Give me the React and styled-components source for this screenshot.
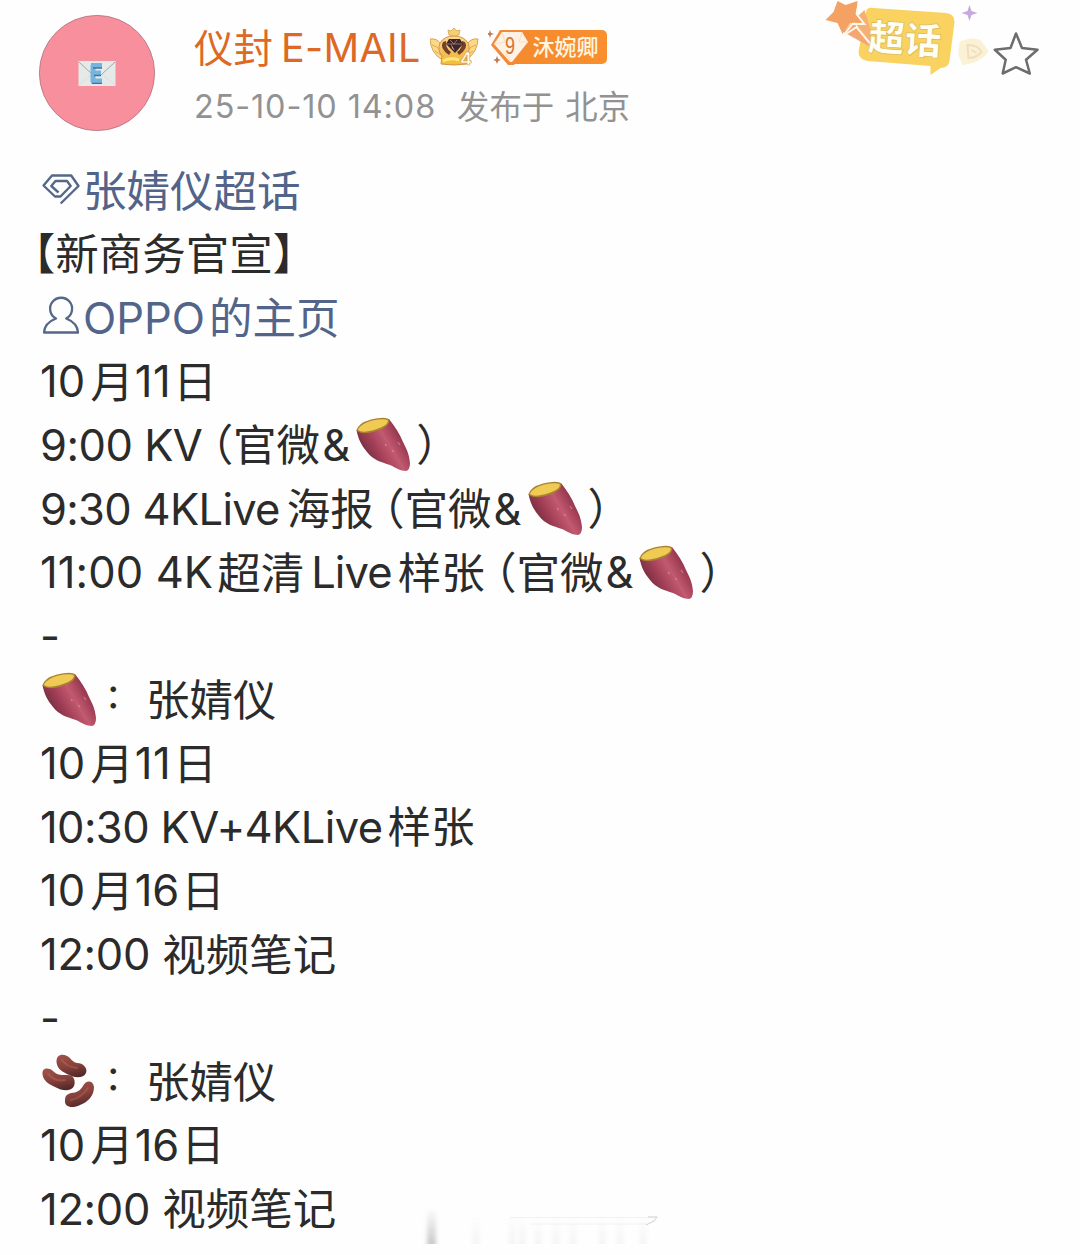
import React from 'react';
import styled, { createGlobalStyle } from 'styled-components';


const GlobalStyle = createGlobalStyle`
    * {
        box-sizing: border-box;
    }
    body {
        margin: 0;
        background: #fefefe;
        font-family: Inter, "Noto Sans CJK SC", sans-serif;
    }
`

const Page = styled.main`
    position: relative;
    width: 1080px;
    height: 1255px;
    overflow: hidden;
    background: #fefefe;
`

const Header = styled.header`
    display: flex;
    align-items: flex-start;
    height: 159px;
    padding: 0 40px 0 38px;
`

const AvatarIcon = styled.svg`
    flex: none;
    width: 118px;
    height: 118px;
    margin-top: 14px;
`

const Author = styled.div`
    flex: 1;
    padding: 18px 0 0 38px;
`

const NameRow = styled.div`
    display: flex;
    align-items: center;
    height: 60px;
`

const Name = styled.h1`
    display: flex;
    align-items: center;
    margin: 0;
    font-size: 39.5px;
    font-weight: 400;
    line-height: 60px;
    color: #dc6a26;
    white-space: nowrap;
`

const Meta = styled.p`
    display: flex;
    align-items: center;
    height: 57px;
    margin: 0;
    font-size: 32.4px;
    line-height: 57px;
    color: #929292;
    white-space: pre;
`

const CrownIcon = styled.svg`
    width: 50px;
    height: 40px;
    margin-left: 9px;
`

const FanBadge = styled.div`
    display: flex;
    align-items: center;
    width: 120px;
    height: 38px;
    margin: 0 0 3px 8px;
`

const FanGem = styled.svg`
    flex: none;
    width: 44px;
    height: 38px;
    z-index: 1;
`

const FanLabel = styled.span`
    width: 93px;
    height: 34px;
    margin-left: -18px;
    padding-left: 19px;
    border-radius: 0 5px 5px 0;
    background: linear-gradient(90deg, #f58a2c, #f98f2f);
    color: #fff6e2;
    font-family: "Noto Sans CJK SC", sans-serif;
    font-size: 22px;
    font-weight: 500;
    line-height: 31px;
    white-space: nowrap;
`

const TopicIcon = styled.svg`
    flex: none;
    width: 170px;
    height: 80px;
`

const StarIcon = styled.svg`
    flex: none;
    width: 48px;
    height: 48px;
    margin-top: 30px;
`

const Content = styled.section`
    padding-left: 40px;
`

const Line = styled.div`
    display: flex;
    align-items: center;
    height: 63.65px;
    font-size: 43.5px;
    line-height: 63px;
    color: ${props => props.$link ? '#526489' : '#2b2b2b'};
    white-space: pre;
`

const Run = styled.span`
    margin-left: ${props => props.$left || 0}px;
    letter-spacing: ${props => props.$spacing || 0}px;
    text-autospace: no-autospace;
`

const Cjk = styled(Run)`
    padding-bottom: 5px;
    font-family: "Noto Sans CJK SC", sans-serif;
    font-feature-settings: ${props => props.$half ? '"halt" 1' : 'normal'};
`

const Colon = styled(Cjk)`
    width: 41px;
    padding-bottom: 11px;
    font-size: 33px;
    font-weight: 500;
`

const LineIcon = styled.svg`
    flex: none;
    width: ${props => props.$width || 57}px;
    height: ${props => props.$height || 56}px;
    margin-left: ${props => props.$left || 0}px;
    margin-bottom: ${props => props.$bottom || 0}px;
`

const Watermark = styled.svg`
    position: absolute;
    left: 400px;
    top: 1200px;
    width: 280px;
    height: 50px;
`


const Avatar = () => (
    <AvatarIcon viewBox="0 0 118 118">
        <circle cx="59" cy="59" r="57.6" fill="#f88f9c" stroke="#b77883" strokeWidth="0.9"/>
        <rect x="40.5" y="47" width="37" height="25" fill="#e5e9e8"/>
        <path d="M41 48 55 61M77 48 63 61" stroke="#9da9aa" strokeWidth="1"/>
        <path d="M41 71 54 60M77 71 64 60" stroke="#d4dcdb" strokeWidth="0.8"/>
        <path d="M53 51.5H64M53 59H63M53 67H64M55 51V68" stroke="#76b4e0" strokeWidth="5" fill="none"/>
        <path d="M55 54H64M56 61.5H63M54 69.3H64" stroke="#44709c" strokeWidth="1.3"/>
    </AvatarIcon>
)

const Crown = () => (
    <CrownIcon viewBox="1 1 50 40">
        <defs>
            <linearGradient id="gold" x1="0" y1="0" x2="0" y2="1">
                <stop offset="0" stopColor="#fbd994"/>
                <stop offset="0.6" stopColor="#f3bd55"/>
                <stop offset="1" stopColor="#f6c02e"/>
            </linearGradient>
        </defs>
        <path d="M1 12Q8 11 12 17L14 30L12 32Q2 26 1 12ZM49 12Q42 11 38 17L36 30L38 32Q48 26 49 12Z" fill="#fbd987" stroke="#dba24c" strokeWidth="1"/>
        <path d="M3 18Q8 19 12 24M6 24 12 28M47 18Q42 19 38 24M44 24 38 28" stroke="#e2a94a" strokeWidth="1" fill="none"/>
        <path d="M11 16Q15 9 25 9Q35 9 39 16Q42 23 37 29L38 37Q25 39 12 37L13 29Q8 23 11 16Z" fill="url(#gold)" stroke="#d1944a" strokeWidth="1"/>
        <path d="M20 8 19 3 22 4 25 1 28 4 31 3 30 8Q25 10 20 8Z" fill="#f6cf72" stroke="#dba24c" strokeWidth="0.8"/>
        <path d="M14 15Q10 21 20 28L22 25Q16 21 17 14ZM36 15Q40 21 30 28L28 25Q34 21 33 14Z" fill="#74412a"/>
        <path d="M20 12H31L34 17L26 26L17 17Z" fill="#3b262a"/>
        <path d="M21 13 25 17 28 13M18 17H33" stroke="#a77b70" strokeWidth="0.9" fill="none"/>
        <path d="M22 17 26 24 23 21Z" fill="#e2b6a0"/>
        <path d="M14 34Q22 30 30 33" stroke="#ffe884" strokeWidth="3" fill="none"/>
        <text x="31" y="38" fill="#fffdf0" stroke="#dc9a31" strokeWidth="0.6" fontFamily="Inter, sans-serif" fontSize="18" fontWeight="700">4</text>
    </CrownIcon>
)

const Gem = () => (
    <FanGem viewBox="0 0 44 38">
        <path d="M12 2H36L43 15L26 37H20L3 17Z" fill="#f28a37"/>
        <path d="M14 4H34L40 14L24 34H22L6 16Z" fill="#fff1e3"/>
        <path d="M14 4 17 14 6 16M34 4 31 14 40 14M23 34 18 25" stroke="#f9dfc8" strokeWidth="1" fill="none"/>
        <text x="17" y="26" fill="#d97634" fontFamily="Liberation Sans, sans-serif" fontWeight="400" fontSize="24" textLength="10" lengthAdjust="spacingAndGlyphs">9</text>
        <path d="M2 2 3 5 6 6 3 7 2 10 1 7-2 6 1 5ZM9 28 10.200 31 13 32 10.200 33 9 36 7.800 33 5 32 7.800 31Z" fill="#bc7b54"/>
    </FanGem>
)

const TopicBadge = () => (
    <TopicIcon viewBox="1.500 0 170 80">
        <path d="M46 10Q48 7 53 8L126 13Q134 14 134 22L129 61Q128 68 120 68L110 75V66L47 61Q38 59 38 52Z" fill="#f9d260"/>
        <path d="M23 32 32 22 50 40 48 46Z" fill="#f4a773"/>
        <path d="M33 20 44 10 51 32 49 45Z" fill="#f4b075"/>
        <path d="M24 35 36 27 50 44" stroke="#fff8e8" strokeWidth="2" fill="none"/>
        <path d="M17 1 25 5 37 1 36 13 42 22 30 23 22 34 17 23 5 20 13 12Z" fill="#f3a264"/>
        <path d="M37 8 36 14 44 24 32 24 24 34" stroke="#fff9ec" strokeWidth="1.800" fill="none"/>
        <text x="47" y="50" transform="rotate(4 46 50)" fontFamily="Noto Sans CJK SC, sans-serif" fontWeight="900" fontSize="36.500" fill="#fffef2" stroke="#dcb953" strokeWidth="0.700">超话</text>
        <path d="M149 5 151 11 157 13 151 15 149 21 147 15 141 13 147 11Z" fill="#c7a9df"/>
        <path d="M139 42Q150 36 160 40L168 51Q163 62 142 65L138 55Z" fill="#fbf1d5"/>
        <path d="M147 45Q158 45 161 52Q156 58 148 58ZM151 50 156 53" stroke="#f0dfbc" strokeWidth="2" fill="none"/>
    </TopicIcon>
)

const Star = () => (
    <StarIcon viewBox="0 0 48 48">
        <path d="M24 3.500 30 18 45.500 19.800 34 29.700 37.800 43.500 24 37.200 10.700 43.500 13.700 29.700 2.800 19.800 18.500 18Z" fill="none" stroke="#6d6d6d" strokeWidth="2.500" strokeLinejoin="round"/>
    </StarIcon>
)

const Diamond = () => (
    <LineIcon viewBox="0 0 43 40" $width={43} $height={40} $bottom={5}>
        <path d="M20.700 35.500 38.500 18 31.200 7.500H12L3.500 17.500 15 28.500H20.500L30.700 18 27 13H15.500L11.300 18 18.500 24.500" fill="none" stroke="#566887" strokeWidth="2.400" strokeLinejoin="round"/>
    </LineIcon>
)

const Person = () => (
    <LineIcon viewBox="0 0 43 44" $width={43} $height={44} $bottom={7}>
        <path d="M16 25.500A11 11 0 1 1 26.200 25.500Q37.500 30 38 39.500H4Q4.500 30 16 25.500Z" fill="none" stroke="#566887" strokeWidth="2.300" strokeLinejoin="round"/>
    </LineIcon>
)

const Potato = ({ left }) => (
    <LineIcon viewBox="0 0 57 56" $left={left}>
        <defs>
            <linearGradient id="skin" x1="0.150" y1="0.750" x2="0.850" y2="0.350">
                <stop offset="0" stopColor="#6f2a3c"/>
                <stop offset="0.350" stopColor="#a23f57"/>
                <stop offset="0.650" stopColor="#c25a70"/>
                <stop offset="1" stopColor="#93344c"/>
            </linearGradient>
        </defs>
        <path d="M1.500 13C3 21 6 28 12 35C18 43 26 45 35 48C41 51 46 54 51 54Q55 53 55 46C54 36 51 31 48 25C45 17 40 10 34 2Q18 2 1.500 13Z" fill="url(#skin)"/>
        <path d="M43 25 45 28M37 33 39 35M30 27 31.500 29" stroke="#e0a0aa" strokeWidth="1.300" opacity="0.550"/>
        <path d="M1.500 13.500Q3 6 16 2.500Q31-1 34 2.500Q36 9 23 13.500Q7 19 1.500 13.500Z" fill="#a8822f"/>
        <path d="M3 12.500Q6 6.500 17 3.500Q30 1 33 3.500Q33 8.500 22 12Q7 17 3 13Z" fill="#efca55"/>
    </LineIcon>
)

const Beans = () => (
    <LineIcon viewBox="0 0 57 56" $bottom={1}>
        <defs>
            <linearGradient id="bean" x1="0.200" y1="0" x2="0.500" y2="1">
                <stop offset="0" stopColor="#a05249"/>
                <stop offset="0.550" stopColor="#87403a"/>
                <stop offset="1" stopColor="#54292a"/>
            </linearGradient>
        </defs>
        <path d="M16.500 9C16 2 22 0 27 3C31 5 32 9 37 10C43 10 48 15 46 20C43 26 34 25 27 21C21 18 17 15 16.500 9Z" fill="url(#bean)"/>
        <path d="M2.500 21C2 15 8 14 13 18C17 22 20 22 26 22C34 21 36 28 34 33C31 39 22 38 15 34C8 31 3 27 2.500 21Z" fill="url(#bean)"/>
        <path d="M43 33C46 27 53 27 54 34C54 43 48 49 40 52C32 56 24 54 25 47C25 41 30 40 35 39.500Q40 38 43 33Z" fill="url(#bean)"/>
        <path d="M22 7Q27 14 37 15M8 21Q15 29 25 27M31 47Q41 45 48 35" stroke="#b8736a" strokeWidth="2" fill="none" opacity="0.400" strokeLinecap="round"/>
    </LineIcon>
)

const FadedMark = () => (
    <Watermark viewBox="0 0 280 50">
        <defs>
            <linearGradient id="fade" x1="0" y1="0" x2="0" y2="1">
                <stop offset="0" stopColor="#888" stopOpacity="0"/>
                <stop offset="1" stopColor="#888" stopOpacity="0.450"/>
            </linearGradient>
            <filter id="soft"><feGaussianBlur stdDeviation="2 0"/></filter>
        </defs>
        <g fill="url(#fade)" filter="url(#soft)">
            <rect x="27" y="8" width="9" height="36"/>
            {[73, 109, 119, 135, 153, 170, 199, 217, 240].map(x => (
                <rect key={x} x={x} y="15" width="6" height="29" opacity="0.2"/>
            ))}
        </g>
        <path d="M110 17.500H252M130 24H248" stroke="#f2f2f2" strokeWidth="1"/>
        <path d="M248 17H257L254 21 246 25" fill="none" stroke="#cfcfcf" strokeWidth="1"/>
    </Watermark>
)


class App extends React.Component {
    renderDate = (day) => (
        <Line>
            <Run>10</Run>
            <Cjk $left={5}>月</Cjk>
            <Run $left={1} $spacing={day === '11' ? 0.6 : 0}>{day}</Run>
            <Cjk $left={2}>日</Cjk>
        </Line>
    )

    renderChannels = (left) => (
        <>
            <Cjk $left={left} $half>（官微</Cjk>
            <Run $left={2}>&amp;</Run>
            <Potato left={5}/>
            <Cjk $left={4} $half>）</Cjk>
        </>
    )

    renderNote = () => (
        <Line>
            <Run $spacing={-0.3}>12:00</Run>
            <Cjk $left={12}>视频笔记</Cjk>
        </Line>
    )

    render() {
        return (
            <Page>
                <GlobalStyle/>
                <Header>
                    <Avatar/>
                    <Author>
                        <NameRow>
                            <Name>
                                <Cjk>仪封</Cjk>
                                <Run $left={8} $spacing={0.3}>E-MAIL</Run>
                            </Name>
                            <Crown/>
                            <FanBadge>
                                <Gem/>
                                <FanLabel>沐婉卿</FanLabel>
                            </FanBadge>
                        </NameRow>
                        <Meta>
                            <Run $spacing={0.9}>25-10-10 14:08</Run>
                            <Cjk $left={21}>发布于</Cjk>
                            <Cjk $left={11}>北京</Cjk>
                        </Meta>
                    </Author>
                    <TopicBadge/>
                    <Star/>
                </Header>
                <Content>
                    <Line $link>
                        <Diamond/>
                        <Cjk>张婧仪超话</Cjk>
                    </Line>
                    <Line>
                        <Cjk $left={-6.5} $half>【新商务官宣】</Cjk>
                    </Line>
                    <Line $link>
                        <Person/>
                        <Run>OPPO</Run>
                        <Cjk $left={4}>的主页</Cjk>
                    </Line>
                    {this.renderDate('11')}
                    <Line>
                        <Run $spacing={-0.5}>9:00 KV</Run>
                        {this.renderChannels(9)}
                    </Line>
                    <Line>
                        <Run $spacing={-0.7}>9:30 4KLive</Run>
                        <Cjk $left={7}>海报</Cjk>
                        {this.renderChannels(9)}
                    </Line>
                    <Line>
                        <Run $spacing={0.1}>11:00 4K</Run>
                        <Cjk $left={4}>超清</Cjk>
                        <Run $left={7} $spacing={-0.9}>Live</Run>
                        <Cjk $left={6}>样张</Cjk>
                        {this.renderChannels(10)}
                    </Line>
                    <Line><Run>-</Run></Line>
                    <Line>
                        <Potato left={1}/>
                        <Colon $left={7}>：</Colon>
                        <Cjk>张婧仪</Cjk>
                    </Line>
                    {this.renderDate('11')}
                    <Line>
                        <Run $spacing={-0.6}>10:30 KV+4KLive</Run>
                        <Cjk $left={5}>样张</Cjk>
                    </Line>
                    {this.renderDate('16')}
                    {this.renderNote()}
                    <Line><Run>-</Run></Line>
                    <Line>
                        <Beans/>
                        <Colon $left={8}>：</Colon>
                        <Cjk>张婧仪</Cjk>
                    </Line>
                    {this.renderDate('16')}
                    {this.renderNote()}
                </Content>
                <FadedMark/>
            </Page>
        );
    }
}


export default App;
